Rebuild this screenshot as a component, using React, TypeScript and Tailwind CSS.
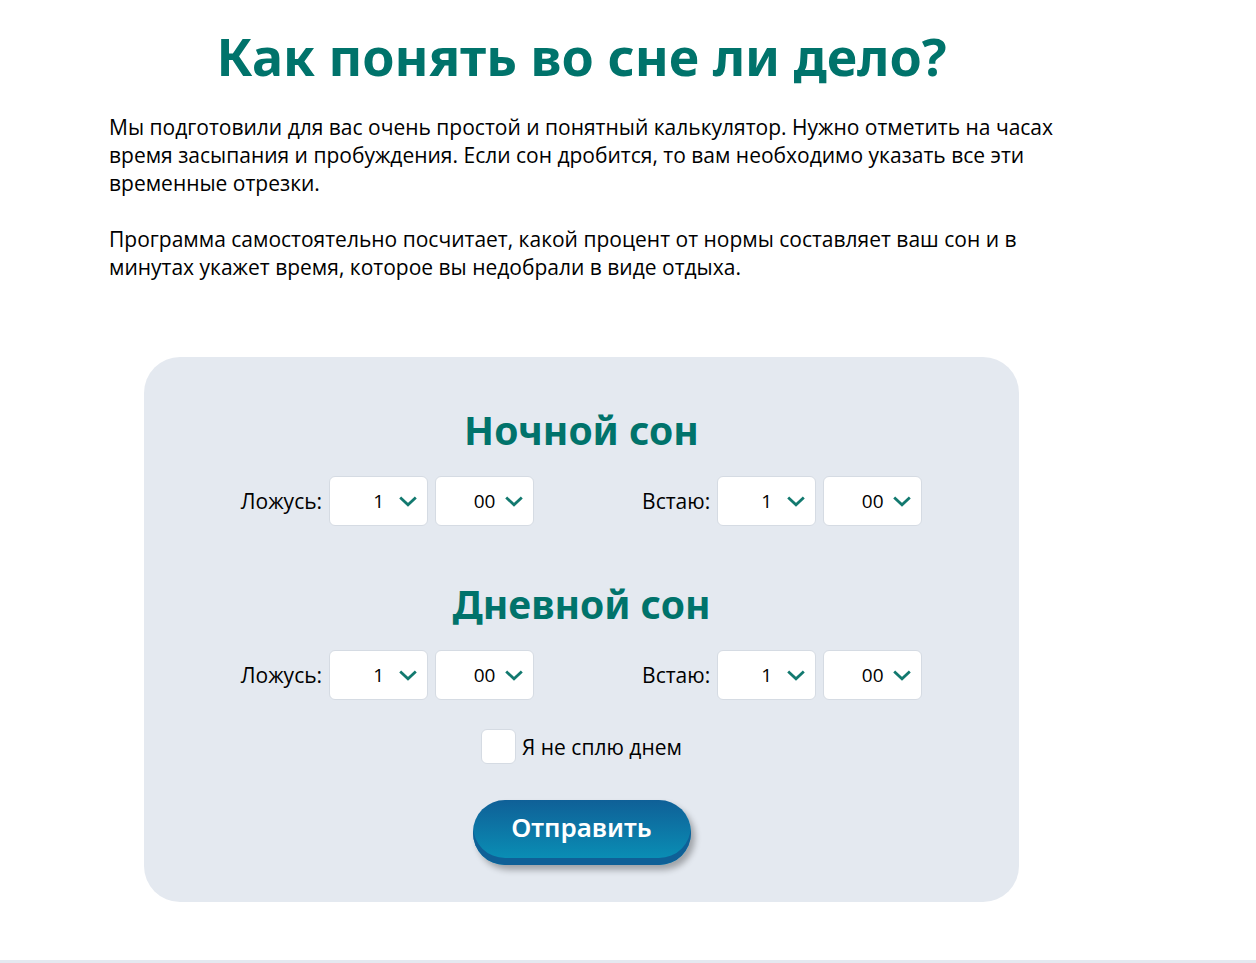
import { useState } from "react";

const hours = Array.from({ length: 24 }, (_, i) => String(i + 1));
const minutes = ["00", "10", "20", "30", "40", "50"];

function TimeSelect({ id, label, options }: { id: string; label?: string; options: string[] }) {
  return (
    <div className="relative">
      <select
        id={id}
        aria-label={label}
        className="block h-[50px] w-[99px] appearance-none rounded-md border border-[#d5dbe3] bg-white text-center [text-align-last:center] font-['Open_Sans',sans-serif] text-[19px] text-black"
      >
        {options.map((o) => (
          <option key={o}>{o}</option>
        ))}
      </select>
      <svg
        aria-hidden="true"
        viewBox="0 0 18 11"
        className="pointer-events-none absolute top-5 right-[11px] h-[11px] w-[18px]"
        fill="none"
        stroke="#12796f"
        strokeWidth="2.8"
      >
        <path d="M1.2 1.5 9 8.8 16.8 1.5" />
      </svg>
    </div>
  );
}

function TimeField({ id, label }: { id: string; label: string }) {
  return (
    <div className="flex items-center gap-[7px]">
      <label htmlFor={id}>{label}</label>
      <TimeSelect id={id} options={hours} />
      <TimeSelect id={id + "-min"} label={label + " минуты"} options={minutes} />
    </div>
  );
}

function SleepRow({ id, title }: { id: string; title: string }) {
  return (
    <section className="flex flex-col items-center">
      <h2 className="mb-[21px] font-['Noto_Sans',sans-serif] text-[39px] leading-[50px] font-bold text-[#00736b]">
        {title}
      </h2>
      <div className="flex flex-wrap justify-center gap-x-27 gap-y-4">
        <TimeField id={id + "-from"} label="Ложусь:" />
        <TimeField id={id + "-to"} label="Встаю:" />
      </div>
    </section>
  );
}

export default function App() {
  const [noNap, setNoNap] = useState(false);
  return (
    <div className="border-b-3 border-[#e4e9f0] bg-white pr-[93px] font-['Open_Sans',sans-serif] text-[21px] leading-7 text-black">
      <main className="mx-auto max-w-[945px] pt-[22px] pb-[58px]">
        <h1 className="text-center font-['Noto_Sans',sans-serif] text-[52px] leading-[68px] font-bold text-[#00736b]">
          Как понять во сне ли дело?
        </h1>
        <p className="mt-[23px]">
          Мы подготовили для вас очень простой и понятный калькулятор. Нужно отметить на часах время засыпания и
          пробуждения. Если сон дробится, то вам необходимо указать все эти временные отрезки.
        </p>
        <p className="mt-7">
          Программа самостоятельно посчитает, какой процент от нормы составляет ваш сон и в минутах укажет время,
          которое вы недобрали в виде отдыха.
        </p>
        <form
          onSubmit={(e) => e.preventDefault()}
          className="mx-auto mt-[76px] flex max-w-[875px] flex-col items-center gap-[53px] rounded-[36px] bg-[#e4e9f0] pt-12 pb-[37px]"
        >
          <SleepRow id="night" title="Ночной сон" />
          <div className="flex flex-col items-center">
            <SleepRow id="day" title="Дневной сон" />
            <label className="mt-[29px] flex items-center gap-1.5">
              <input
                type="checkbox"
                checked={noNap}
                onChange={(e) => setNoNap(e.target.checked)}
                className="size-[35px] appearance-none rounded-md border border-[#d5dbe3] bg-white checked:bg-[#12796f]"
              />
              Я не сплю днем
            </label>
            <button
              type="submit"
              className="mt-9 h-[65px] w-[218px] rounded-[32px] bg-linear-to-b from-[#0f6097] to-[#0993b8] pb-3 font-['Noto_Sans',sans-serif] text-[26px] font-semibold text-white shadow-[inset_0_-7px_0_#0f6097,4px_5px_6px_rgba(0,0,0,0.3)]"
            >
              Отправить
            </button>
          </div>
        </form>
      </main>
    </div>
  );
}
